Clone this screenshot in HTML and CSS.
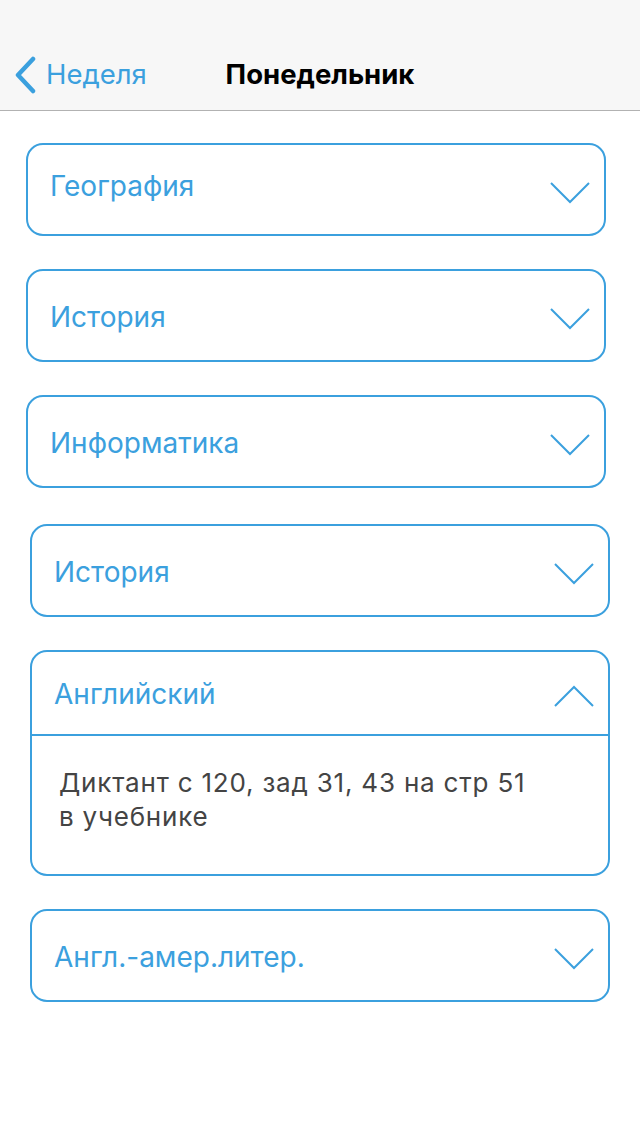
FILE: index.html
```html
<!DOCTYPE html>
<html lang="ru">
<head>
<meta charset="utf-8">
<title>Понедельник</title>
<link rel="stylesheet" href="styles.css">
</head>
<body>
<header class="navbar">
  <div class="nav-row">
    <a class="back" href="#">
      <svg class="back-icon" width="24" height="38" viewBox="0 0 24 38"><polyline points="20,3 5,19 20,35" fill="none" stroke="#3ba0de" stroke-width="4.5" stroke-linecap="round" stroke-linejoin="round"/></svg>
      <span class="back-label">Неделя</span>
    </a>
    <h1 class="title">Понедельник</h1>
  </div>
</header>
<main class="list">
  <section class="card">
    <div class="card-head"><span class="card-title card-title-raised">География</span><svg class="chev" width="40" height="22" viewBox="0 0 40 22"><polyline points="1,1 20,20 39,1" fill="none" stroke="#3ba0de" stroke-width="2"/></svg></div>
  </section>
  <section class="card">
    <div class="card-head"><span class="card-title">История</span><svg class="chev" width="40" height="22" viewBox="0 0 40 22"><polyline points="1,1 20,20 39,1" fill="none" stroke="#3ba0de" stroke-width="2"/></svg></div>
  </section>
  <section class="card">
    <div class="card-head"><span class="card-title">Информатика</span><svg class="chev" width="40" height="22" viewBox="0 0 40 22"><polyline points="1,1 20,20 39,1" fill="none" stroke="#3ba0de" stroke-width="2"/></svg></div>
  </section>
  <section class="card card-shift card-gap">
    <div class="card-head"><span class="card-title">История</span><svg class="chev" width="40" height="22" viewBox="0 0 40 22"><polyline points="1,1 20,20 39,1" fill="none" stroke="#3ba0de" stroke-width="2"/></svg></div>
  </section>
  <section class="card card-shift card-open">
    <div class="card-head card-head-open"><span class="card-title">Английский</span><svg class="chev" width="40" height="22" viewBox="0 0 40 22"><polyline points="1,21 20,2 39,21" fill="none" stroke="#3ba0de" stroke-width="2"/></svg></div>
    <div class="card-body">Диктант с 120, зад 31, 43 на стр 51<br>в учебнике</div>
  </section>
  <section class="card card-shift">
    <div class="card-head"><span class="card-title">Англ.-амер.литер.</span><svg class="chev" width="40" height="22" viewBox="0 0 40 22"><polyline points="1,1 20,20 39,1" fill="none" stroke="#3ba0de" stroke-width="2"/></svg></div>
  </section>
</main>
</body>
</html>
```
FILE: styles.css
```css
html, body {
  margin: 0;
  padding: 0;
  background: #ffffff;
  font-family: Inter, Roboto, "Liberation Sans", sans-serif;
}

.navbar {
  height: 111px;
  box-sizing: border-box;
  background: #f7f7f7;
  border-bottom: 1px solid #b2b2b2;
  padding-top: 40px;
}

.nav-row {
  position: relative;
  height: 67px;
  display: flex;
  align-items: center;
  justify-content: center;
}

.back {
  position: absolute;
  left: 13px;
  top: 0;
  bottom: 0;
  display: flex;
  align-items: center;
  gap: 9px;
  text-decoration: none;
  color: #3ba0de;
}

.back-icon {
  display: block;
  margin-top: 2px;
}

.back-label {
  font-size: 27.5px;
  color: #3ba0de;
}

.title {
  margin: 0;
  font-size: 27.5px;
  font-weight: 700;
  color: #000000;
}

.list {
  display: flex;
  flex-direction: column;
  gap: 33px;
  padding: 32px 0 0 26px;
}

.card {
  width: 580px;
  box-sizing: border-box;
  border: 2px solid #3ba0de;
  border-radius: 17px;
}

.card-shift {
  margin-left: 4px;
}

.card-gap {
  margin-top: 3px;
}

.card-head {
  height: 89px;
  box-sizing: border-box;
  display: flex;
  align-items: center;
  justify-content: space-between;
  padding: 0 14px 0 22px;
}

.card-head-open {
  height: 84px;
  border-bottom: 2px solid #3ba0de;
}

.card-title {
  font-size: 28px;
  color: #3ba0de;
  margin-top: 2px;
}

.card-title-raised {
  margin-top: 0;
  margin-bottom: 7px;
}

.chev {
  display: block;
  margin-top: 6px;
}

.card-body {
  padding: 30px 20px 40px 27px;
  font-size: 26px;
  line-height: 34px;
  letter-spacing: 0.8px;
  color: #444444;
}
```
